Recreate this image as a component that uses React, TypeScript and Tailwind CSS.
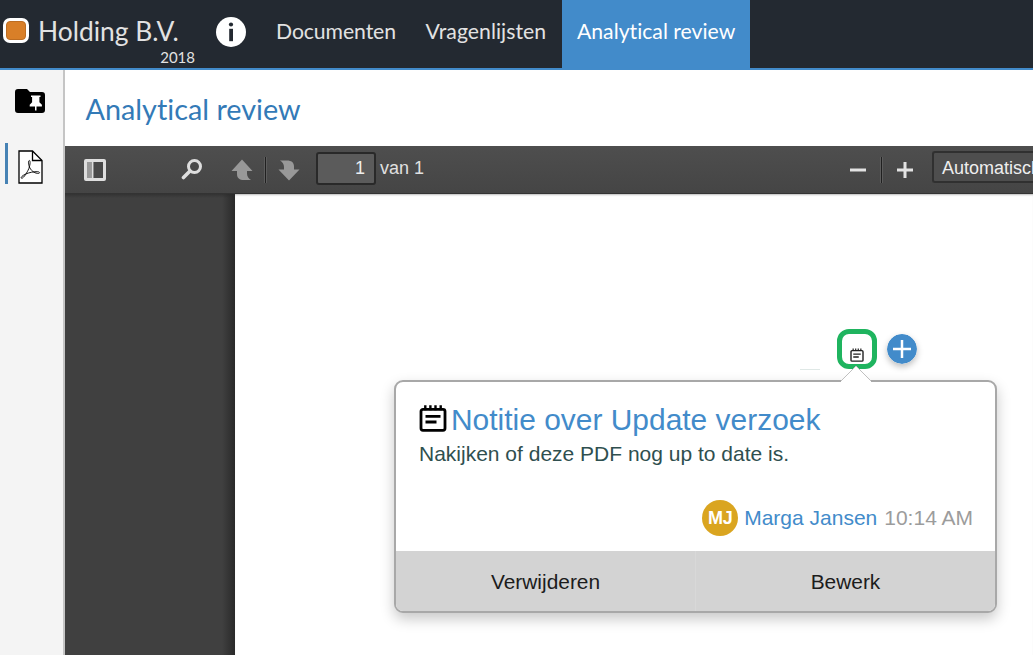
import React from "react";

function NoteIcon({ className }: { className?: string }) {
  return (
    <svg viewBox="0 0 28 28" className={className} fill="none" stroke="currentColor">
      <rect x="2" y="5.300" width="24" height="21" rx="2" strokeWidth="2.800" />
      <path d="M6.300 1.200v5M11.400 1.200v5M16.500 1.200v5M21.700 1.200v5" strokeWidth="2.400" />
      <path d="M6.500 12.300h15M6.500 18h11" strokeWidth="2.800" />
    </svg>
  );
}

function Header() {
  return (
    <header className="flex h-[70px] shrink-0 border-b-2 border-[#428bca] bg-[#232931] font-[Lato,sans-serif] text-[#e2e2e2] [font-variant-ligatures:none]">
      <div className="flex w-[216px] pl-[3px]">
        <div className="mt-[18px] h-[25px] w-[26px] shrink-0 rounded-[7px] bg-white p-[3px]">
          <div className="h-full w-full rounded-[4px] border border-[#bd6d22] bg-[#d97f28]" />
        </div>
        <div className="ml-[9px] flex w-[157px] flex-col">
          <span className="mt-[15px] h-[32px] text-[26.4px] leading-[32px] whitespace-nowrap">Holding B.V.</span>
          <span className="self-end text-[15px] leading-[20px]">2018</span>
        </div>
      </div>
      <svg viewBox="0 0 30 30" className="mt-[17px] h-[30px] w-[30px]">
        <circle cx="15" cy="15" r="15" fill="#fff" />
        <circle cx="15" cy="7.500" r="2.100" fill="#232931" />
        <path d="M13.200 11.800h3.800v12.400h-3.800z" fill="#232931" />
      </svg>
      <nav className="ml-[15px] flex text-[21.2px] leading-[62px] whitespace-nowrap">
        <a className="w-[149px] pl-[15px] tracking-[-0.08px]">Documenten</a>
        <a className="w-[152px] pl-[15.500px] tracking-[0.05px]">Vragenlijsten</a>
        <a className="h-[68px] w-[188px] bg-[#428bca] pl-[15px] text-white">Analytical review</a>
      </nav>
    </header>
  );
}

function Sidebar() {
  return (
    <aside className="flex w-[65px] shrink-0 flex-col border-r-2 border-[#c5c5c5] bg-[#f4f4f4]">
      <svg viewBox="0 0 30 24" className="mt-[19px] ml-[15px] h-[24px] w-[30px]">
        <path d="M3 0h9l3 3h12a3 3 0 0 1 3 3v15a3 3 0 0 1-3 3H3a3 3 0 0 1-3-3V3a3 3 0 0 1 3-3z" fill="#000" />
        <path d="M16 6.500h9.500v1.500h-1.100v5.300l2.500 2.500v1.700h-5.400V21.500h-1.500v-4h-5.300v-1.700l2.400-2.500V8H16z" fill="#fff" />
      </svg>
      <div className="mt-[30px] flex h-[41px] pl-[5px]">
        <div className="w-[3px] bg-[#4682b4]" />
        <svg viewBox="0 0 25 34" className="mt-[7px] ml-[10px] h-[34px] w-[25px]" fill="none" stroke="#000">
          <path d="M1 1h13.500L24 10.500V33H1z" fill="#fff" strokeWidth="1.300" />
          <path d="M14.500 1v9.500H24" strokeWidth="1.300" />
          <path d="M11.400 10.500c-1.400 0-1.200 4 .5 7.500 2 3.500 5.500 5.600 8.600 5.400 1.600-.2 1.300-1.500-.7-1.700-3.500-.3-8.800.8-12.500 2.500-3.400 1.700-4.700 3.300-3.900 4 1.400.8 4.700-4 6.700-8s2.600-9.500 1.300-9.700z" strokeWidth=".9" />
        </svg>
      </div>
    </aside>
  );
}

function Separator() {
  return <div className="h-[26px] w-[3px] border-x border-[#5c5c5c] bg-[#202020]" />;
}

function Toolbar() {
  return (
    <div className="flex h-[48px] shrink-0 overflow-hidden border-b border-[#333] bg-linear-to-b from-[#4e4e4e] to-[#454545] font-['Liberation_Sans',sans-serif] text-[18px] text-[#e0e0e0]">
      <svg viewBox="0 0 22 22" className="mt-[13px] ml-[19px] h-[22px] w-[22px]">
        <rect x="1.500" y="1.500" width="19" height="19" rx=".5" fill="#484848" stroke="#dedede" strokeWidth="3" />
        <path d="M3 3h5v16H3z" fill="#999" />
        <path d="M8.700 3v16" stroke="#ddd" strokeWidth="1.500" />
      </svg>
      <svg viewBox="0 0 22 22" className="mt-[12px] ml-[75px] h-[22px] w-[22px]" fill="none" stroke="#dedede">
        <circle cx="13.500" cy="8.500" r="6" strokeWidth="3" />
        <path d="M9 13l-6.500 6.500" strokeWidth="3.600" strokeLinecap="round" />
      </svg>
      <svg viewBox="0 0 22 22" className="mt-[13px] ml-[28px] h-[22px] w-[22px]">
        <path d="M11 .5L21.500 12H16v2.500c0 3 1.500 5 4 6.500h-7c-4.500 0-7-2-7-6V12H.5z" fill="#989898" />
      </svg>
      <div className="mt-[11px] ml-[11px]"><Separator /></div>
      <svg viewBox="0 0 22 22" className="mt-[13px] ml-[11px] h-[22px] w-[22px]">
        <path d="M11 21.500L.5 10.500H6V8c0-3-1.500-5-4-6.500h7c4.500 0 7 2 7 6v3h5.500z" fill="#989898" />
      </svg>
      <div className="mt-[6px] ml-[16px] h-[33px] w-[60px] rounded-[3px] border-2 border-[#292929] bg-[#5b5b5b] pr-[9px] text-right leading-[29px] text-[#eee]">1</div>
      <span className="ml-[4px] leading-[45px]">van 1</span>
      <svg viewBox="0 0 16 16" className="mt-[16px] ml-auto h-[16px] w-[16px] shrink-0">
        <path d="M0 8h16" stroke="#e3e3e3" strokeWidth="3" />
      </svg>
      <div className="mt-[11px] ml-[14px]"><Separator /></div>
      <svg viewBox="0 0 16 16" className="mt-[16px] ml-[14px] h-[16px] w-[16px] shrink-0">
        <path d="M0 8h16M8 0v16" stroke="#e3e3e3" strokeWidth="3" />
      </svg>
      <div className="mt-[5px] ml-[19px] h-[32px] w-[101px] shrink-0 rounded-l-[3px] border-2 border-r-0 border-[#303030] bg-[#4e4e4e] pl-[8px] leading-[30px] whitespace-nowrap text-[#eee]">Automatisch</div>
    </div>
  );
}

function NotePopup() {
  return (
    <div className="absolute top-[186px] left-[159px] flex h-[233px] w-[603px] flex-col overflow-visible rounded-[9px] border-2 border-[#a8a8a8] bg-white shadow-[0_6px_14px_rgba(0,0,0,0.22)]">
      <svg viewBox="0 0 32 18" className="absolute -top-[17px] left-[444px] h-[18px] w-[32px]">
        <path d="M1 16L16 1l15 15v2H1z" fill="#fff" />
        <path d="M1 16L16 1l15 15" fill="none" stroke="#c0c0c0" strokeWidth="1" />
      </svg>
      <div className="flex h-[169px] shrink-0 flex-col pl-[23px]">
        <div className="mt-[20px] flex h-[36px]">
          <NoteIcon className="mt-[2px] h-[28px] w-[28px] text-black" />
          <h2 className="ml-[4px] text-[29.95px] leading-[35px] whitespace-nowrap text-[#428bca]">Notitie over Update verzoek</h2>
        </div>
        <p className="mt-[3px] text-[21px] leading-[26px] whitespace-nowrap text-[#2f4f4f]">Nakijken of deze PDF nog up to date is.</p>
        <div className="mt-[33px] mr-[22px] flex h-[36px] items-center justify-end text-[21px] whitespace-nowrap">
          <span className="flex h-[36px] w-[36px] items-center justify-center rounded-full bg-[#daa520] text-[18px] font-bold tracking-[-0.3px] text-white">MJ</span>
          <span className="ml-[6px] text-[#428bca]">Marga Jansen</span>
          <span className="ml-[7px] text-[#9c9c9c]">10:14 AM</span>
        </div>
      </div>
      <div className="flex h-[60px] shrink-0 rounded-b-[7px] bg-[#d3d3d3] text-center text-[20.9px] leading-[61px] text-[#1c1c1c]">
        <div className="w-[300px] border-r border-[#d8d8d8]">Verwijderen</div>
        <div className="flex-1">Bewerk</div>
      </div>
    </div>
  );
}

function Viewer() {
  return (
    <div className="flex min-h-0 flex-1 bg-[#404040] font-['Liberation_Sans',sans-serif]">
      <div className="w-[170px] shrink-0 bg-[linear-gradient(to_right,transparent_157px,#292929_170px),linear-gradient(to_bottom,#333,#404040_4px)]" />
      <div className="relative flex-1 bg-white shadow-[inset_0_2px_2px_-1px_#bbb]">
        <div className="absolute top-[175px] left-[565px] h-px w-[20px] bg-[#dfe8e6]" />
        <div className="absolute top-[135px] left-[602px] flex h-[40px] w-[40px] justify-center rounded-[12px] border-[5px] border-[#1fb45f] bg-white pt-[14px]">
          <NoteIcon className="h-[14px] w-[14px] text-[#222]" />
        </div>
        <svg viewBox="0 0 30 30" className="absolute top-[140px] left-[652px] h-[30px] w-[30px] rounded-full shadow-[0_3px_6px_rgba(0,0,0,0.25)]">
          <circle cx="15" cy="15" r="15" fill="#428bca" />
          <path d="M6 15h18M15 6v18" stroke="#fff" strokeWidth="2.500" />
        </svg>
        <NotePopup />
      </div>
    </div>
  );
}

export default function App() {
  return (
    <div className="flex h-[655px] w-[1033px] flex-col overflow-hidden bg-white">
      <Header />
      <div className="flex min-h-0 flex-1">
        <Sidebar />
        <main className="flex min-w-0 flex-1 flex-col">
          <h1 className="h-[76px] shrink-0 pl-[20.500px] font-[Lato,sans-serif] text-[28.800px] leading-[78px] text-[#337ab7] [font-variant-ligatures:none]">Analytical review</h1>
          <Toolbar />
          <Viewer />
        </main>
      </div>
    </div>
  );
}
